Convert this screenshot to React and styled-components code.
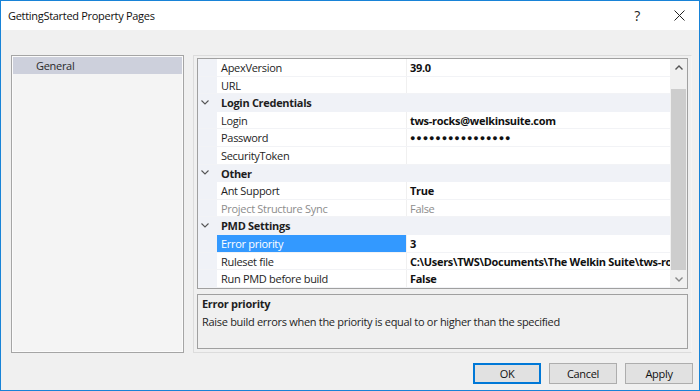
import React from 'react'
import styled, { createGlobalStyle } from 'styled-components'

const GlobalStyle = createGlobalStyle`
  body{
    margin: 0;
    padding: 0;
    background: #f0f0f0;
    font-family: 'Open Sans', 'Noto Sans', sans-serif;
    font-size: 11px;
    letter-spacing: -0.3px;
    color: #1e1e1e;
  }
  *, *::before, *::after{
    box-sizing: border-box;
  }
`

const Window = styled.div`
  width: 700px;
  height: 391px;
  border: 1px solid #1883d7;
  background: #f0f0f0;
  display: flex;
  flex-direction: column;
  overflow: hidden;
`

const TitleBar = styled.div`
  height: 29px;
  flex: none;
  background: #fff;
  display: flex;
  align-items: center;
  justify-content: space-between;
  padding-left: 7px;
`

const Title = styled.div`
  font-size: 11px;
  color: #111;
`

const Controls = styled.div`
  display: flex;
  align-items: center;
  height: 100%;
`

const CtrlButton = styled.div`
  width: ${({ $w }) => $w}px;
  flex: none;
  height: 100%;
  display: flex;
  align-items: center;
  justify-content: center;
  font-size: 14px;
  color: #222;
`

const Body = styled.div`
  display: flex;
  gap: 9px;
  padding: 25px 7px 0 10px;
  height: 323px;
  flex: none;
`

const PageList = styled.div`
  width: 173px;
  height: 298px;
  border: 1px solid #a5a5a5;
  box-shadow: inset 0 0 0 1px #fbfbfb;
  background: #f4f4f4;
  padding: 1px;
`

const PageItem = styled.div`
  height: 17px;
  line-height: 17px;
  padding-left: 23px;
  background: ${({ $active }) => ($active ? '#cdd0dc' : 'transparent')};
  color: #2a2a2a;
`

const Frame = styled.div`
  flex: 1;
  height: 298px;
  border: 1px solid #dcdcdc;
  border-right-color: #f4f4f4;
  padding: 2px 3px 3px 3px;
  display: flex;
  flex-direction: column;
  gap: 5px;
`

const Grid = styled.div`
  height: 231px;
  border: 1px solid #a0a0a0;
  background: #fff;
  display: flex;
  flex: none;
`

const Rows = styled.div`
  flex: 1;
  display: flex;
  flex-direction: column;
  overflow: hidden;
`

const Row = styled.div`
  height: 17.6px;
  flex: none;
  display: grid;
  grid-template-columns: 19px 189px 1px 1fr;
  align-items: stretch;
  line-height: 17px;
  background: ${({ $category }) => ($category ? '#f0f2f7' : '#fff')};
  border-bottom: 1px solid ${({ $category }) => ($category ? '#f0f2f7' : '#f2f3f6')};
`

const Gutter = styled.div`
  background: #f0f2f7;
  display: flex;
  align-items: center;
  justify-content: center;
  padding-right: 6px;
`

const Name = styled.div`
  padding-left: 4px;
  white-space: nowrap;
  overflow: hidden;
  background: ${({ $selected }) => ($selected ? '#3399ff' : 'transparent')};
  color: ${({ $selected, $disabled }) =>
    $selected ? '#fff' : $disabled ? '#8d8d8d' : '#1e1e1e'};
  font-weight: ${({ $category }) => ($category ? 700 : 400)};
  grid-column: ${({ $category }) => ($category ? '2 / 5' : 'auto')};
`

const Divider = styled.div`
  background: #f0f0f0;
`

const Value = styled.div`
  padding-left: 3px;
  white-space: nowrap;
  overflow: hidden;
  font-weight: ${({ $disabled }) => ($disabled ? 400 : 700)};
  color: ${({ $disabled }) => ($disabled ? '#8d8d8d' : '#111')};
`

const Dots = styled.span`
  font-size: 9px;
  letter-spacing: 0.9px;
  vertical-align: 1px;
`

const ScrollBar = styled.div`
  width: 17px;
  flex: none;
  background: #f0f0f0;
  display: flex;
  flex-direction: column;
`

const Arrow = styled.div`
  height: 17px;
  flex: none;
  display: flex;
  align-items: center;
  justify-content: center;
`

const Track = styled.div`
  flex: 1;
  padding: 13px 1px 0 1px;
`

const Thumb = styled.div`
  height: 181px;
  background: #cdcdcd;
`

const Desc = styled.div`
  height: 55px;
  border: 1px solid #a0a0a0;
  background: #f0f0f0;
  padding: 0 4px;
  line-height: 17.5px;
`

const DescTitle = styled.div`
  font-weight: 700;
`

const Footer = styled.div`
  display: flex;
  justify-content: flex-end;
  gap: 8px;
  padding: 10px 6px 0 0;
`

const Button = styled.div`
  width: 68px;
  height: 21px;
  display: flex;
  align-items: center;
  justify-content: center;
  background: #e1e1e1;
  border: ${({ $primary }) => ($primary ? '2px solid #0078d7' : '1px solid #adadad')};
  color: #111;
`

const Chevron = () => (
  <svg width="8" height="5" viewBox="0 0 8 5">
    <path d="M0.5 0.5 L4 4 L7.5 0.5" fill="none" stroke="#555" strokeWidth="1.1" />
  </svg>
)

const ArrowIcon = ({ down }) => (
  <svg width="8" height="5" viewBox="0 0 8 5">
    <path
      d={down ? 'M0.5 0.5 L4 4 L7.5 0.5' : 'M0.5 4.5 L4 1 L7.5 4.5'}
      fill="none"
      stroke={down ? '#888' : '#555'}
      strokeWidth="1.4"
    />
  </svg>
)

const CloseIcon = () => (
  <svg width="11" height="11" viewBox="0 0 11 11">
    <path d="M0.5 0.5 L10.5 10.5 M10.5 0.5 L0.5 10.5" stroke="#222" strokeWidth="1" />
  </svg>
)

const rows = [
  { name: 'ApexVersion', value: '39.0' },
  { name: 'URL', value: '' },
  { category: 'Login Credentials' },
  { name: 'Login', value: 'tws-rocks@welkinsuite.com' },
  { name: 'Password', password: true },
  { name: 'SecurityToken', value: '' },
  { category: 'Other' },
  { name: 'Ant Support', value: 'True' },
  { name: 'Project Structure Sync', value: 'False', disabled: true },
  { category: 'PMD Settings' },
  { name: 'Error priority', value: '3', selected: true },
  { name: 'Ruleset file', value: 'C:\\Users\\TWS\\Documents\\The Welkin Suite\\tws-rocks\\ruleset.xml' },
  { name: 'Run PMD before build', value: 'False' },
]

const App = () => (
  <>
    <GlobalStyle />
    <Window>
      <TitleBar>
        <Title>GettingStarted Property Pages</Title>
        <Controls>
          <CtrlButton $w={44}>?</CtrlButton>
          <CtrlButton $w={40}>
            <CloseIcon />
          </CtrlButton>
        </Controls>
      </TitleBar>
      <Body>
        <PageList>
          <PageItem $active>General</PageItem>
        </PageList>
        <Frame>
          <Grid>
            <Rows>
              {rows.map((r, i) =>
                r.category ? (
                  <Row key={i} $category>
                    <Gutter>
                      <Chevron />
                    </Gutter>
                    <Name $category>{r.category}</Name>
                  </Row>
                ) : (
                  <Row key={i}>
                    <Gutter />
                    <Name $selected={r.selected} $disabled={r.disabled}>
                      {r.name}
                    </Name>
                    <Divider />
                    <Value $disabled={r.disabled}>
                      {r.password ? <Dots>{'●'.repeat(16)}</Dots> : r.value}
                    </Value>
                  </Row>
                )
              )}
            </Rows>
            <ScrollBar>
              <Arrow>
                <ArrowIcon />
              </Arrow>
              <Track>
                <Thumb />
              </Track>
              <Arrow>
                <ArrowIcon down />
              </Arrow>
            </ScrollBar>
          </Grid>
          <Desc>
            <DescTitle>Error priority</DescTitle>
            <div>Raise build errors when the priority is equal to or higher than the specified</div>
          </Desc>
        </Frame>
      </Body>
      <Footer>
        <Button $primary>OK</Button>
        <Button>Cancel</Button>
        <Button>Apply</Button>
      </Footer>
    </Window>
  </>
)

export default App
